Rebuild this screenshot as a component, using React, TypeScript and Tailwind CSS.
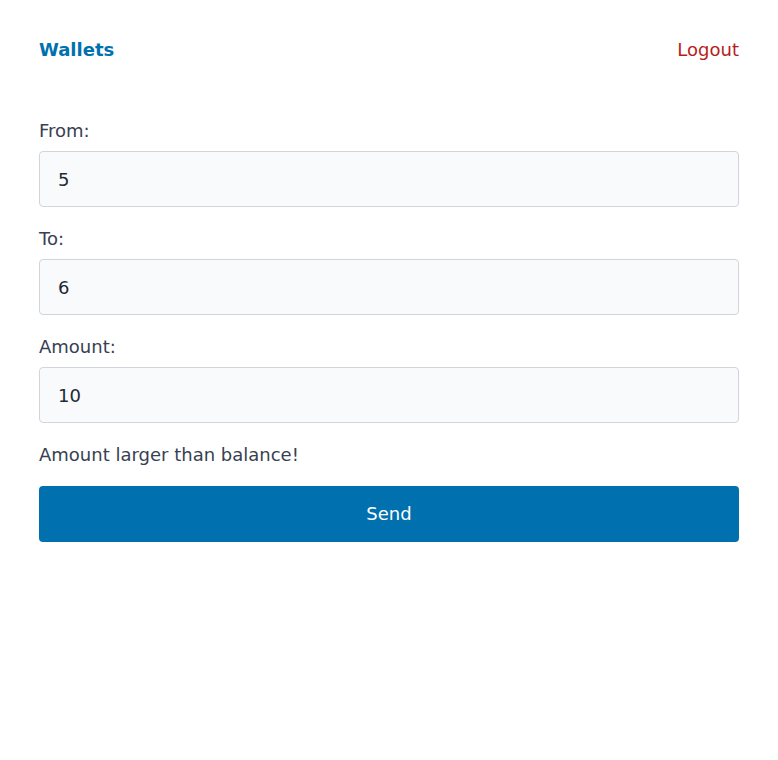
import React, { useState } from "react";

const Field: React.FC<{
  label: string;
  value: string;
  onChange: (v: string) => void;
}> = ({ label, value, onChange }) => (
  <div className="flex flex-col">
    <label className="leading-6 text-[#374151]">{label}</label>
    <input
      value={value}
      onChange={(e) => onChange(e.target.value)}
      className="mt-2 h-14 w-full rounded border border-[#d1d5db] bg-[#f9fafb] px-[18px] text-[#1f2937] outline-none"
    />
  </div>
);

const App: React.FC = () => {
  const [from, setFrom] = useState("5");
  const [to, setTo] = useState("6");
  const [amount, setAmount] = useState("10");

  return (
    <div
      className="min-h-screen bg-white px-[39px] pt-[38px] text-lg"
      style={{ fontFamily: '"DejaVu Sans", sans-serif' }}
    >
      <div className="flex items-center justify-between leading-6">
        <a href="#" className="font-bold text-[#0071ae]">
          Wallets
        </a>
        <a href="#" className="text-[#b91c1c]">
          Logout
        </a>
      </div>

      <form
        className="mt-[57px] flex flex-col gap-5"
        onSubmit={(e) => e.preventDefault()}
      >
        <Field label="From:" value={from} onChange={setFrom} />
        <Field label="To:" value={to} onChange={setTo} />
        <Field label="Amount:" value={amount} onChange={setAmount} />
        <p className="leading-6 text-[#374151]">Amount larger than balance!</p>
        <button
          type="submit"
          className="-mt-px h-14 w-full rounded bg-[#0071ae] text-white"
        >
          Send
        </button>
      </form>
    </div>
  );
};

export default App;
